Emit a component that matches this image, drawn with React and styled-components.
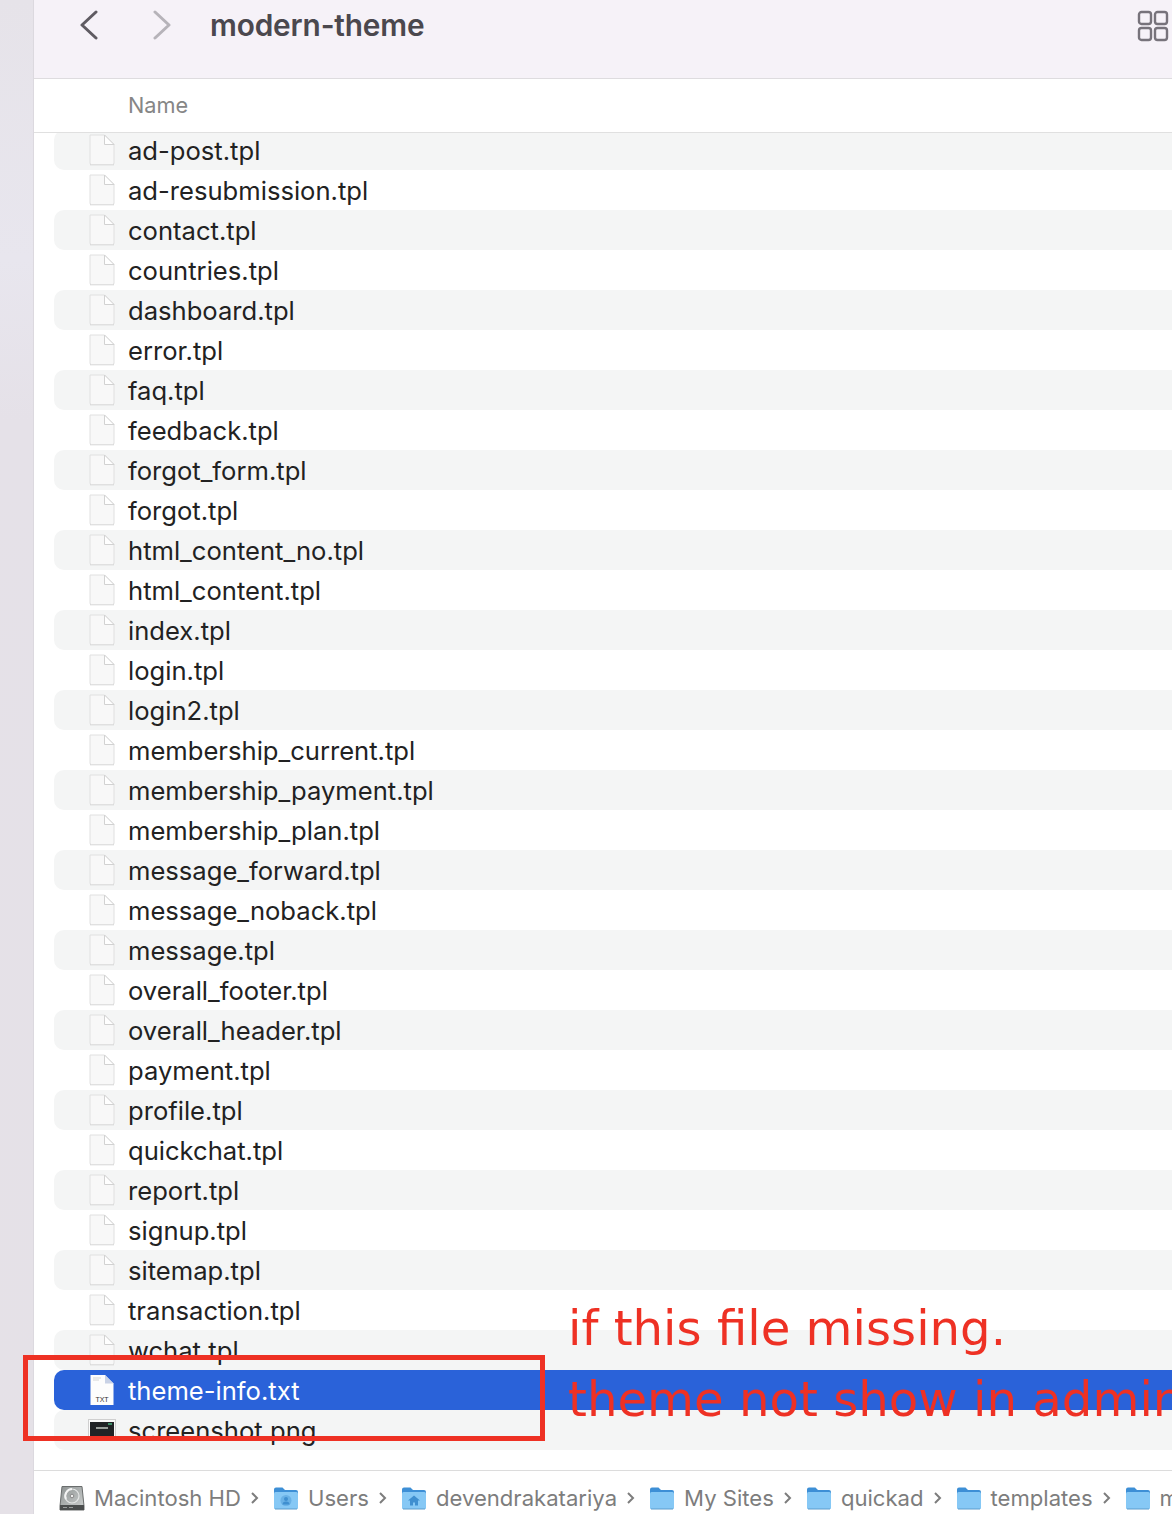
import styled, { createGlobalStyle } from "styled-components"

const files = [
    "ad-post.tpl", "ad-resubmission.tpl", "contact.tpl", "countries.tpl", "dashboard.tpl",
    "error.tpl", "faq.tpl", "feedback.tpl", "forgot_form.tpl", "forgot.tpl",
    "html_content_no.tpl", "html_content.tpl", "index.tpl", "login.tpl", "login2.tpl",
    "membership_current.tpl", "membership_payment.tpl", "membership_plan.tpl",
    "message_forward.tpl", "message_noback.tpl", "message.tpl", "overall_footer.tpl",
    "overall_header.tpl", "payment.tpl", "profile.tpl", "quickchat.tpl", "report.tpl",
    "signup.tpl", "sitemap.tpl", "transaction.tpl", "wchat.tpl", "theme-info.txt", "screenshot.png",
]

const crumbs = [
    { name: "Macintosh HD", icon: "disk" },
    { name: "Users", icon: "user" },
    { name: "devendrakatariya", icon: "home" },
    { name: "My Sites", icon: "folder" },
    { name: "quickad", icon: "folder" },
    { name: "templates", icon: "folder" },
    { name: "modern-theme", icon: "folder" },
]

const FileIcon = () => (
    <svg width="28" height="32" viewBox="0 0 28 32">
        <path d="M2 30.5h24" stroke="#cfcfcf" strokeWidth="1.5" />
        <path d="M2 1H16.5L26 10.5V29a1.5 1.5 0 0 1-1.5 1.5H3.5A1.5 1.5 0 0 1 2 29Z" fill="#f8f8f8" stroke="#e0e0e0" />
        <path d="M16.5 1V10.5H26Z" fill="#fff" stroke="#d2d2d2" strokeLinejoin="round" />
    </svg>
)

const TextIcon = () => (
    <svg width="28" height="32" viewBox="0 0 28 32">
        <path d="M2.5 1H17L25.5 9.5V31H2.5Z" fill="#fdfdfd" />
        <path d="M17 1V9.5H25.5Z" fill="#c9d2e6" />
        <path d="M5 4H13M5 6H11" stroke="#d5d5d5" />
        <text x="14" y="28" textAnchor="middle" fontSize="7" fontFamily="Liberation Sans, sans-serif" fill="#333">TXT</text>
    </svg>
)

const ImageIcon = () => (
    <svg width="28" height="22" viewBox="0 0 28 22">
        <rect x="0.5" y="0.5" width="27" height="21" fill="#fbfbfb" stroke="#cfcfcf" />
        <rect x="2" y="3" width="24" height="17" fill="#202326" />
        <rect x="8" y="8" width="12" height="2" fill="#9aa09c" />
        <rect x="20" y="4" width="4" height="2" fill="#3f8f6a" />
    </svg>
)

const DiskIcon = () => (
    <svg width="26" height="26" viewBox="0 0 26 26">
        <defs>
            <linearGradient id="disk" x1="0" y1="0" x2="1" y2="1">
                <stop offset="0" stopColor="#8d9292" />
                <stop offset="1" stopColor="#cfd2d1" />
            </linearGradient>
        </defs>
        <path d="M3 1.5H23L25 21V25H1V21Z" fill="url(#disk)" stroke="#6a6d6d" />
        <circle cx="13" cy="11" r="7" fill="none" stroke="#e4e6e6" strokeWidth="1.2" />
        <path d="M13 4a7 7 0 0 0-6 10" fill="none" stroke="#f4f4f4" strokeWidth="2" />
        <circle cx="13" cy="11" r="1.8" fill="#eeeeee" stroke="#888" />
        <rect x="1" y="20" width="24" height="5" fill="#4b4e4e" />
        <path d="M4 22.5h4M10 22.5h4" stroke="#9a9d9d" />
    </svg>
)

const FolderIcon = ({ badge }) => (
    <svg width="26" height="24" viewBox="0 0 26 24">
        <path d="M1 3.5a2 2 0 0 1 2-2h6.5l2.5 2.5H23a2 2 0 0 1 2 2V21a2 2 0 0 1-2 2H3a2 2 0 0 1-2-2Z" fill="#3d8fd6" />
        <rect x="1" y="6" width="24" height="17" rx="1.5" fill="#86c8f5" />
        <path d="M2 23h22" stroke="#5a9ccc" />
        {badge === "user" && (
            <g fill="#3f8fd0">
                <circle cx="13" cy="14.5" r="5.5" opacity="0.4" />
                <circle cx="13" cy="13" r="2" />
                <path d="M9.5 18.5a3.5 3 0 0 1 7 0Z" />
            </g>
        )}
        {badge === "home" && <path d="M13 9.5l6 5h-2v5h-3v-3h-2v3H9v-5H7Z" fill="#3f8fd0" />}
    </svg>
)

const CrumbIcon = ({ icon }) => {
    if (icon === "disk") return <DiskIcon />
    if (icon === "user" || icon === "home") return <FolderIcon badge={icon} />
    return <FolderIcon />
}

const App = () => {
    return (
        <Window>
            <GlobalStyle />
            <SideStrip />
            <Finder>
                <Toolbar>
                    <NavButton>
                        <svg width="20" height="30" viewBox="0 0 20 30" fill="none" stroke="#5f5b62" strokeWidth="3" strokeLinecap="round" strokeLinejoin="round">
                            <path d="M17 2L3 15L17 28" />
                        </svg>
                    </NavButton>
                    <NavButton>
                        <svg width="20" height="30" viewBox="0 0 20 30" fill="none" stroke="#b6b3b9" strokeWidth="3" strokeLinecap="round" strokeLinejoin="round">
                            <path d="M3 2L17 15L3 28" />
                        </svg>
                    </NavButton>
                    <Title>modern-theme</Title>
                    <ViewButton>
                        <svg width="32" height="32" viewBox="0 0 32 32" fill="none" stroke="#77737b" strokeWidth="2.4">
                            <rect x="2" y="2" width="12" height="12" rx="2.5" />
                            <rect x="18" y="2" width="12" height="12" rx="2.5" />
                            <rect x="2" y="18" width="12" height="12" rx="2.5" />
                            <rect x="18" y="18" width="12" height="12" rx="2.5" />
                        </svg>
                    </ViewButton>
                </Toolbar>
                <ColumnHeader>Name</ColumnHeader>
                <ListClip>
                    <FileList>
                        {files.map((name, i) => {
                            const selected = name === "theme-info.txt"
                            return (
                                <Row key={name} $striped={i % 2 === 0} $selected={selected}>
                                    <IconSlot>
                                        {selected ? <TextIcon /> : name.endsWith(".png") ? <ImageIcon /> : <FileIcon />}
                                    </IconSlot>
                                    <FileName>{name}</FileName>
                                </Row>
                            )
                        })}
                    </FileList>
                </ListClip>
                <PathBar>
                    {crumbs.map((crumb, i) => (
                        <Crumb key={crumb.name}>
                            <CrumbIcon icon={crumb.icon} />
                            <span>{crumb.name}</span>
                            {i < crumbs.length - 1 && (
                                <svg width="9" height="14" viewBox="0 0 9 14" fill="none" stroke="#7d7d7d" strokeWidth="2">
                                    <path d="M2 2l5 5-5 5" />
                                </svg>
                            )}
                        </Crumb>
                    ))}
                </PathBar>
            </Finder>
            <Highlight />
            <NoteTop>if this file missing.</NoteTop>
            <NoteBottom>theme not show in admin</NoteBottom>
        </Window>
    )
}

const GlobalStyle = createGlobalStyle`
    html, body {
        margin: 0;
        padding: 0;
        background: #fff;
    }
`

const Window = styled.div`
    position: relative;
    display: flex;
    width: 1172px;
    height: 1514px;
    overflow: hidden;
    font-family: "Inter", "Liberation Sans", sans-serif;
`

const SideStrip = styled.div`
    width: 34px;
    flex-shrink: 0;
    background: linear-gradient(180deg, #e6e3e9 0, #e8e6ee 260px, #e5e1e8 420px, #e5e1e7 100%);
    border-right: 1px solid #dcd9df;
    box-sizing: border-box;
`

const Finder = styled.div`
    flex: 1;
    min-width: 0;
    display: flex;
    flex-direction: column;
    background: #fff;
`

const Toolbar = styled.div`
    height: 79px;
    flex-shrink: 0;
    box-sizing: border-box;
    display: flex;
    align-items: flex-start;
    padding: 10px 3px 0 45px;
    background: #f6f2f8;
    border-bottom: 1px solid #dedcdf;
`

const NavButton = styled.div`
    width: 20px;
    height: 30px;
    margin-right: 53px;
    &:nth-child(2) {
        margin-right: 38px;
    }
`

const Title = styled.div`
    flex: 1;
    font-size: 29.8px;
    line-height: 30px;
    font-weight: 600;
    color: #4b484e;
    letter-spacing: -0.15px;
`

const ViewButton = styled.div`
    width: 32px;
    height: 32px;
`

const ColumnHeader = styled.div`
    height: 54px;
    flex-shrink: 0;
    box-sizing: border-box;
    padding: 0 0 2px 94px;
    display: flex;
    align-items: center;
    font-size: 21.7px;
    color: #868686;
    border-bottom: 1px solid #e0e0e0;
`

const ListClip = styled.div`
    height: 1338px;
    flex-shrink: 0;
    overflow: hidden;
    border-bottom: 1px solid #dcdcdc;
    box-sizing: border-box;
`

const FileList = styled.div`
    margin-top: -3px;
    padding-left: 20px;
`

const Row = styled.div`
    height: 40px;
    display: flex;
    align-items: center;
    border-radius: 10px 0 0 10px;
    color: ${(props) => (props.$selected ? "#fff" : "#222")};
    background: ${(props) => (props.$selected ? "#2a62d9" : props.$striped ? "#f4f5f5" : "transparent")};
`

const IconSlot = styled.div`
    width: 74px;
    padding-left: 34px;
    box-sizing: border-box;
    display: flex;
    svg {
        display: block;
    }
`

const FileName = styled.div`
    font-size: 25.6px;
    line-height: 40px;
    padding-top: 2px;
    white-space: nowrap;
`

const PathBar = styled.div`
    flex: 1;
    display: flex;
    align-items: flex-start;
    padding: 14px 0 0 25px;
    gap: 14px;
    overflow: hidden;
`

const Crumb = styled.div`
    display: flex;
    align-items: center;
    gap: 9px;
    flex-shrink: 0;
    font-size: 22.1px;
    line-height: 26px;
    color: #7d7d7d;
    white-space: nowrap;
`

const Highlight = styled.div`
    position: absolute;
    left: 23px;
    top: 1355px;
    width: 522px;
    height: 86px;
    box-sizing: border-box;
    border: 5px solid #ee3124;
`

const NoteTop = styled.div`
    position: absolute;
    left: 568px;
    top: 1298px;
    font-family: "DejaVu Sans", sans-serif;
    font-size: 48.2px;
    line-height: 60px;
    color: #ee3124;
    white-space: nowrap;
`

const NoteBottom = styled(NoteTop)`
    top: 1369px;
`

export default App
